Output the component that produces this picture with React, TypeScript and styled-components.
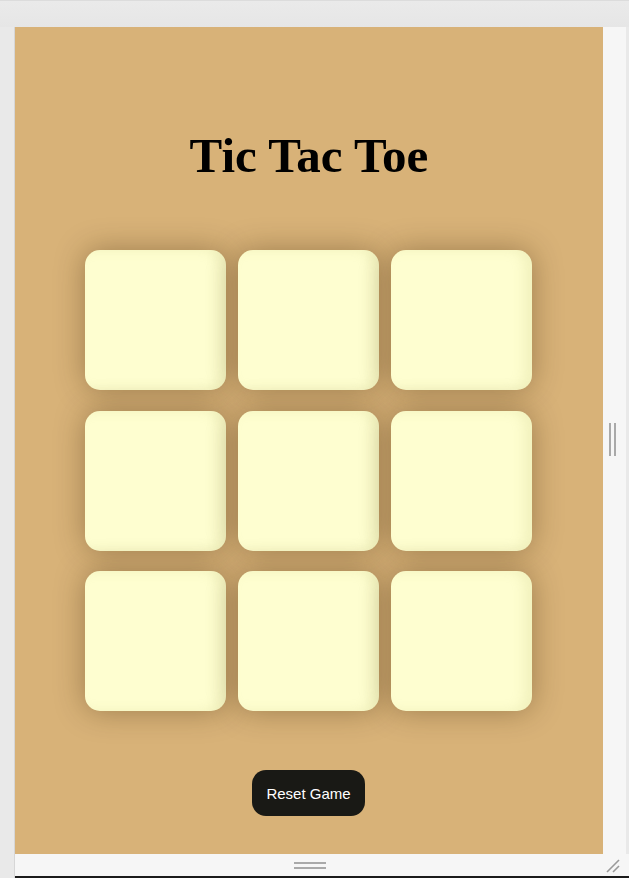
import React from 'react';
import styled, { createGlobalStyle } from 'styled-components';

const GlobalStyle = createGlobalStyle`
    html, body {
        margin: 0;
        padding: 0;
        background: #e9e9e9;
    }
`

export const Frame = styled.div`
    width: 629px;
    height: 878px;
    display: flex;
    flex-direction: column;
    background: #e9e9e9;
    overflow: hidden;
`

export const TopBar = styled.div`
    height: 27px;
    flex-shrink: 0;
    border-top: 1px solid #dcdcdc;
    box-sizing: border-box;
    background: linear-gradient(#eaeaea, #e6e6e6);
`

export const Middle = styled.div`
    display: flex;
    flex: 1;
`

export const LeftStrip = styled.div`
    width: 15px;
    flex-shrink: 0;
    box-sizing: border-box;
    border-right: 1px solid #d6d6d6;
    background: #e9e9e9;
`

export const Stage = styled.div`
    display: flex;
    flex-direction: column;
    width: 614px;
`

export const StageRow = styled.div`
    display: flex;
    height: 827px;
`

export const Viewport = styled.div`
    width: 588px;
    height: 827px;
    background: #d8b278;
    display: flex;
    flex-direction: column;
    align-items: center;
    font-family: "Liberation Serif", "Times New Roman", serif;
`

export const RightStrip = styled.div`
    width: 23px;
    display: flex;
    align-items: center;
    justify-content: center;
    background: #f6f6f6;
    border-right: 3px solid #e9e9e9;
`

export const BottomStrip = styled.div`
    height: 22px;
    display: flex;
    align-items: center;
    justify-content: center;
    position: relative;
    background: #f6f6f6;
`

export const BottomEdge = styled.div`
    height: 2px;
    background: #1b1b1b;
`

export const VHandle = styled.div`
    width: 7px;
    height: 33px;
    margin-right: 4px;
    margin-top: -2px;
    border-left: 2px solid #a9a9a9;
    border-right: 2px solid #a9a9a9;
    box-sizing: border-box;
`

export const HHandle = styled.div`
    width: 32px;
    height: 7px;
    margin-left: -24px;
    border-top: 2px solid #a9a9a9;
    border-bottom: 2px solid #a9a9a9;
    box-sizing: border-box;
`

export const Grip = styled.svg`
    position: absolute;
    right: 8px;
    bottom: 2px;
`

export const Title = styled.h1`
    font-size: 49px;
    font-weight: 700;
    color: #000;
    margin: 100px 0 66px;
    line-height: normal;
`

export const Board = styled.div`
    display: grid;
    grid-template-columns: repeat(3, 141px);
    grid-template-rows: repeat(3, 140px);
    column-gap: 12px;
    row-gap: 20.5px;
    margin-left: -1px;
`

export const Cell = styled.button`
    border: none;
    padding: 0;
    border-radius: 15px;
    background: #fefed0;
    box-shadow: 0 0 30px rgba(60, 40, 10, 0.38), inset -8px 0 12px rgba(190, 190, 110, 0.18);
    cursor: pointer;
`

export const ResetButton = styled.button`
    margin-top: 59px;
    margin-left: -1px;
    width: 113px;
    height: 46px;
    border: none;
    border-radius: 14px;
    background: #191915;
    color: #ffffff;
    font-family: "Liberation Sans", Arial, sans-serif;
    font-size: 15px;
    cursor: pointer;
`

const App: React.FC = () => {
    const cells = Array.from({ length: 9 });

    return (
        <>
            <GlobalStyle />
            <Frame>
                <TopBar />
                <Middle>
                    <LeftStrip />
                    <Stage>
                        <StageRow>
                            <Viewport>
                                <Title>Tic Tac Toe</Title>
                                <Board>
                                    {cells.map((_, i) => (
                                        <Cell key={i} />
                                    ))}
                                </Board>
                                <ResetButton>Reset Game</ResetButton>
                            </Viewport>
                            <RightStrip>
                                <VHandle />
                            </RightStrip>
                        </StageRow>
                        <BottomStrip>
                            <HHandle />
                            <Grip width="16" height="16" viewBox="0 0 16 16">
                                <line x1="2" y1="14" x2="14" y2="2" stroke="#9a9a9a" strokeWidth="1.6" />
                                <line x1="8" y1="14" x2="14" y2="8" stroke="#9a9a9a" strokeWidth="1.6" />
                            </Grip>
                        </BottomStrip>
                        <BottomEdge />
                    </Stage>
                </Middle>
            </Frame>
        </>
    );
}

export default App;
